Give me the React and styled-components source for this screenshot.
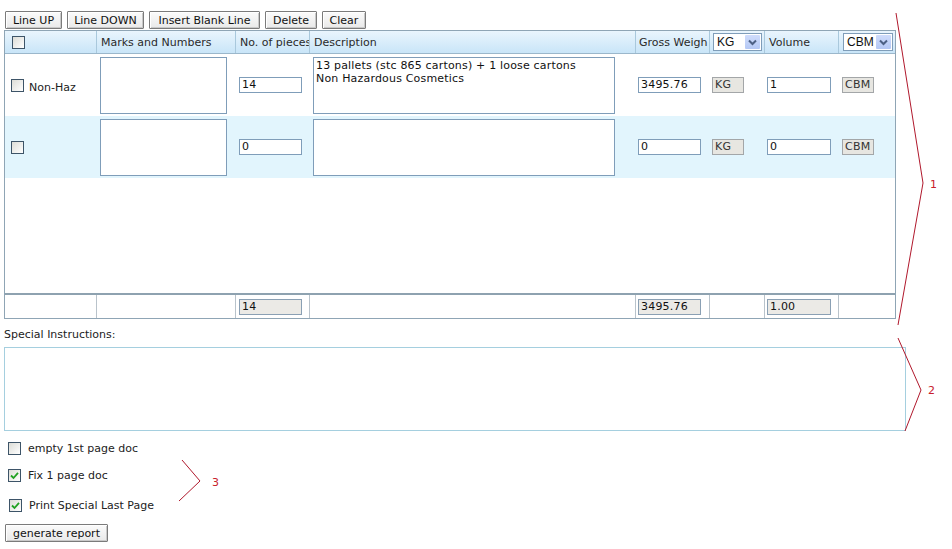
import styled, { createGlobalStyle } from 'styled-components';

const GlobalStyle = createGlobalStyle`
  html, body {
    margin: 0;
    padding: 0;
    background: #ffffff;
  }
  body {
    font-family: "DejaVu Sans", Verdana, sans-serif;
    font-size: 11px;
    color: #111;
  }
`;

const COLS = '92px 139px 74px 326px 74px 55px 74px 56px';

const Page = styled.div`
  position: relative;
  width: 952px;
  height: 549px;
  box-sizing: border-box;
  padding: 11px 0 0 4px;
`;

const Toolbar = styled.div`
  display: flex;
  gap: 5px;
  margin-left: 1px;
`;

const Button = styled.button`
  box-sizing: border-box;
  width: ${(p) => p.$w}px;
  height: 18px;
  padding: 0;
  font-family: "DejaVu Sans", Verdana, sans-serif;
  font-size: 11px;
  color: #111;
  background: linear-gradient(#fbfbfb, #e9e9e9);
  border: 1px solid #7b7b7b;
  box-shadow: inset 1px 1px 0 #ffffff, inset -1px -1px 0 #c9c9c9;
  border-radius: 1px;
`;

const TableBox = styled.div`
  box-sizing: border-box;
  width: 892px;
  height: 289px;
  margin-top: 1px;
  border: 1px solid #8fa5b5;
  display: flex;
  flex-direction: column;
`;

const HeaderRow = styled.div`
  display: grid;
  grid-template-columns: ${COLS};
  height: 23px;
  box-sizing: border-box;
  border-bottom: 1px solid #9bb7cb;
  background: linear-gradient(#eaf5fd, #c9e5f8);
`;

const HeadCell = styled.div`
  display: flex;
  align-items: center;
  box-sizing: border-box;
  padding-left: ${(p) => p.$pl ?? 4}px;
  border-right: ${(p) => (p.$last ? 'none' : '1px solid #a9c8dc')};
  white-space: nowrap;
  overflow: hidden;
  color: #2a2a2a;
`;

const BodyRow = styled.div`
  display: grid;
  grid-template-columns: ${COLS};
  height: 62px;
  background: ${(p) => (p.$alt ? '#e2f5fd' : '#ffffff')};
`;

const Cell = styled.div`
  display: flex;
  align-items: center;
  gap: 5px;
  box-sizing: border-box;
  padding-left: ${(p) => p.$pl ?? 3}px;
  white-space: nowrap;
`;

const HazText = styled.span`
  padding-top: 5px;
  color: #222;
`;

const Filler = styled.div`
  flex: 1;
`;

const FooterRow = styled.div`
  display: grid;
  grid-template-columns: ${COLS};
  height: 25px;
  box-sizing: border-box;
  border-top: 2px solid #8ea2b0;
`;

const FootCell = styled.div`
  display: flex;
  align-items: center;
  box-sizing: border-box;
  padding-left: ${(p) => p.$pl ?? 3}px;
  border-right: ${(p) => (p.$last ? 'none' : '1px solid #b9c3cb')};
`;

const Area = styled.div`
  box-sizing: border-box;
  width: ${(p) => p.$w}px;
  height: 57px;
  border: 1px solid #7f9db9;
  background: #fff;
  padding: 1px 2px;
  font-size: 11px;
  line-height: 13px;
  letter-spacing: 0.18px;
  white-space: normal;
  color: #111;
`;

const Field = styled.div`
  box-sizing: border-box;
  width: ${(p) => p.$w ?? 63}px;
  height: 16px;
  border: 1px solid ${(p) => (p.$grey ? '#8aa0b4' : '#7f9db9')};
  background: ${(p) => (p.$grey ? '#ebeae6' : '#ffffff')};
  padding-left: 2px;
  font-size: 11px;
  line-height: 14px;
  letter-spacing: 0.2px;
  color: #111;
`;

const UnitBox = styled.div`
  box-sizing: border-box;
  width: 32px;
  height: 16px;
  border: 1px solid #a3a6a8;
  background: #e7e6e1;
  padding-left: 2px;
  font-size: 11px;
  line-height: 14px;
  letter-spacing: 0.3px;
  color: #333;
`;

const Select = styled.div`
  box-sizing: border-box;
  display: flex;
  align-items: stretch;
  width: ${(p) => p.$w}px;
  height: 18px;
  border: 1px solid #7f9db9;
  background: #fff;
`;

const SelectText = styled.span`
  flex: 1;
  padding-left: 3px;
  font-family: "Liberation Sans", Arial, sans-serif;
  font-size: 12px;
  line-height: 16px;
  color: #111;
`;

const SelectArrow = styled.span`
  width: 15px;
  margin: 1px;
  display: flex;
  align-items: center;
  justify-content: center;
  background: linear-gradient(#cfdcfb, #b4c8f5);
  border-radius: 1px;
`;

const Box = styled.span`
  box-sizing: border-box;
  display: inline-flex;
  align-items: center;
  justify-content: center;
  flex: none;
  width: 13px;
  height: 13px;
  border: 1px solid #3d5468;
  background: linear-gradient(135deg, #dcdcd6, #ffffff);
`;

const Label = styled.div`
  margin-top: 9px;
  line-height: 13px;
  color: #222;
`;

const Instructions = styled.div`
  box-sizing: border-box;
  width: 902px;
  height: 84px;
  margin-top: 6px;
  border: 1px solid #a5cfdf;
  background: #fff;
`;

const Options = styled.div`
  display: flex;
  flex-direction: column;
  gap: 14px;
  margin-top: 11px;
  padding-left: 4px;
`;

const OptionRow = styled.div`
  display: flex;
  align-items: center;
  gap: 7px;
  height: 13px;
  margin-top: ${(p) => p.$mt ?? 0}px;
  padding-left: ${(p) => p.$pl ?? 0}px;
  color: #222;
`;

const Footer = styled.div`
  margin-top: 12px;
  margin-left: 1px;
`;

const Notes = styled.svg`
  position: absolute;
  left: 0;
  top: 0;
  pointer-events: none;
`;

const Checkbox = ({ checked }) => (
  <Box>
    {checked && (
      <svg width="9" height="9" viewBox="0 0 9 9">
        <path d="M1 4.5 L3.5 7 L8 1.8" fill="none" stroke="#21a121" strokeWidth="1.8" />
      </svg>
    )}
  </Box>
);

const Dropdown = ({ value, w }) => (
  <Select $w={w}>
    <SelectText>{value}</SelectText>
    <SelectArrow>
      <svg width="9" height="7" viewBox="0 0 9 7">
        <path d="M1 1.5 L4.5 5 L8 1.5" fill="none" stroke="#4d6185" strokeWidth="2" />
      </svg>
    </SelectArrow>
  </Select>
);

const rows = [
  {
    haz: 'Non-Haz',
    pieces: '14',
    desc: ['13 pallets (stc 865 cartons) + 1 loose cartons', 'Non Hazardous Cosmetics'],
    gross: '3495.76',
    volume: '1',
  },
  { haz: '', pieces: '0', desc: [], gross: '0', volume: '0' },
];

const App = () => (
  <Page>
    <GlobalStyle />
    <Toolbar>
      <Button $w={57}>Line UP</Button>
      <Button $w={77}>Line DOWN</Button>
      <Button $w={111}>Insert Blank Line</Button>
      <Button $w={52}>Delete</Button>
      <Button $w={44}>Clear</Button>
    </Toolbar>

    <TableBox>
      <HeaderRow>
        <HeadCell $pl={7}>
          <Checkbox />
        </HeadCell>
        <HeadCell>Marks and Numbers</HeadCell>
        <HeadCell>No. of pieces</HeadCell>
        <HeadCell>Description</HeadCell>
        <HeadCell $pl={3}>Gross Weigh</HeadCell>
        <HeadCell $pl={3}>
          <Dropdown value="KG" w={49} />
        </HeadCell>
        <HeadCell>Volume</HeadCell>
        <HeadCell $pl={4} $last>
          <Dropdown value="CBM" w={50} />
        </HeadCell>
      </HeaderRow>

      {rows.map((r, i) => (
        <BodyRow key={i} $alt={i % 2 === 1}>
          <Cell $pl={6}>
            <Checkbox />
            {r.haz && <HazText>{r.haz}</HazText>}
          </Cell>
          <Cell>
            <Area $w={127} />
          </Cell>
          <Cell>
            <Field>{r.pieces}</Field>
          </Cell>
          <Cell>
            <Area $w={302}>
              {r.desc.map((line) => (
                <div key={line}>{line}</div>
              ))}
            </Area>
          </Cell>
          <Cell $pl={2}>
            <Field>{r.gross}</Field>
          </Cell>
          <Cell $pl={2}>
            <UnitBox>KG</UnitBox>
          </Cell>
          <Cell $pl={2}>
            <Field $w={64}>{r.volume}</Field>
          </Cell>
          <Cell>
            <UnitBox>CBM</UnitBox>
          </Cell>
        </BodyRow>
      ))}

      <Filler />

      <FooterRow>
        <FootCell />
        <FootCell />
        <FootCell>
          <Field $grey>14</Field>
        </FootCell>
        <FootCell />
        <FootCell $pl={2}>
          <Field $grey>3495.76</Field>
        </FootCell>
        <FootCell />
        <FootCell $pl={2}>
          <Field $grey $w={64}>1.00</Field>
        </FootCell>
        <FootCell $last />
      </FooterRow>
    </TableBox>

    <Label>Special Instructions:</Label>
    <Instructions />

    <Options>
      <OptionRow>
        <Checkbox />
        empty 1st page doc
      </OptionRow>
      <OptionRow>
        <Checkbox checked />
        Fix 1 page doc
      </OptionRow>
      <OptionRow $mt={3} $pl={1}>
        <Checkbox checked />
        Print Special Last Page
      </OptionRow>
    </Options>

    <Footer>
      <Button $w={103}>generate report</Button>
    </Footer>

    <Notes width="952" height="549" viewBox="0 0 952 549">
      <g fill="none" stroke="#b0182c" strokeWidth="1">
        <polyline points="896,13 923,183 898,325" />
        <polyline points="898,338 921,390 905,431" />
        <polyline points="182,460 200,481 179,501" />
      </g>
      <g fill="#c8202c" fontFamily="DejaVu Sans, Verdana, sans-serif" fontSize="11">
        <text x="930" y="188">1</text>
        <text x="928" y="394">2</text>
        <text x="212" y="486">3</text>
      </g>
    </Notes>
  </Page>
);

export default App;
